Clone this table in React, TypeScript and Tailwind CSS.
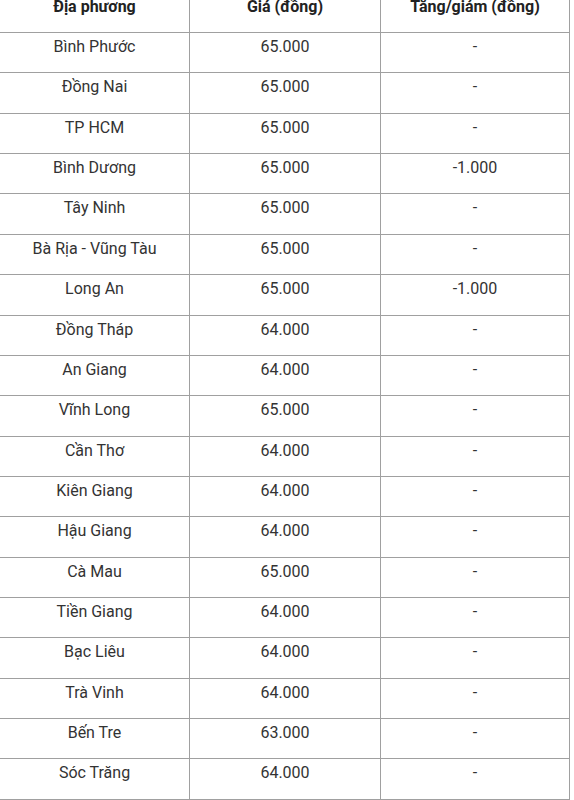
const rows: [string, string, string][] = [
  ['Bình Phước', '65.000', '-'],
  ['Đồng Nai', '65.000', '-'],
  ['TP HCM', '65.000', '-'],
  ['Bình Dương', '65.000', '-1.000'],
  ['Tây Ninh', '65.000', '-'],
  ['Bà Rịa - Vũng Tàu', '65.000', '-'],
  ['Long An', '65.000', '-1.000'],
  ['Đồng Tháp', '64.000', '-'],
  ['An Giang', '64.000', '-'],
  ['Vĩnh Long', '65.000', '-'],
  ['Cần Thơ', '64.000', '-'],
  ['Kiên Giang', '64.000', '-'],
  ['Hậu Giang', '64.000', '-'],
  ['Cà Mau', '65.000', '-'],
  ['Tiền Giang', '64.000', '-'],
  ['Bạc Liêu', '64.000', '-'],
  ['Trà Vinh', '64.000', '-'],
  ['Bến Tre', '63.000', '-'],
  ['Sóc Trăng', '64.000', '-'],
];

function Row({ cells, head }: { cells: string[]; head?: boolean }) {
  return (
    <div className="grid grid-cols-[190px_191px_189px] h-[40.37px]">
      {cells.map((c, i) => (
        <div
          key={i}
          className={`border-b border-r border-[#a0a0a0] pt-[2px] text-center text-[16px] leading-6 ${
            head ? 'font-bold text-[#222]' : 'text-[#333]'
          }`}
        >
          {c}
        </div>
      ))}
    </div>
  );
}

export default function App() {
  return (
    <div className="w-[574px] h-[800px] overflow-hidden bg-white font-['Roboto','Liberation_Sans',sans-serif]">
      {/* table top is scrolled just out of view, header row is clipped */}
      <div className="w-[570px] -mt-[8.37px] border-t border-[#a0a0a0]">
        <Row head cells={['Địa phương', 'Giá (đồng)', 'Tăng/giảm (đồng)']} />
        {rows.map((r) => (
          <Row key={r[0]} cells={r} />
        ))}
      </div>
    </div>
  );
}
